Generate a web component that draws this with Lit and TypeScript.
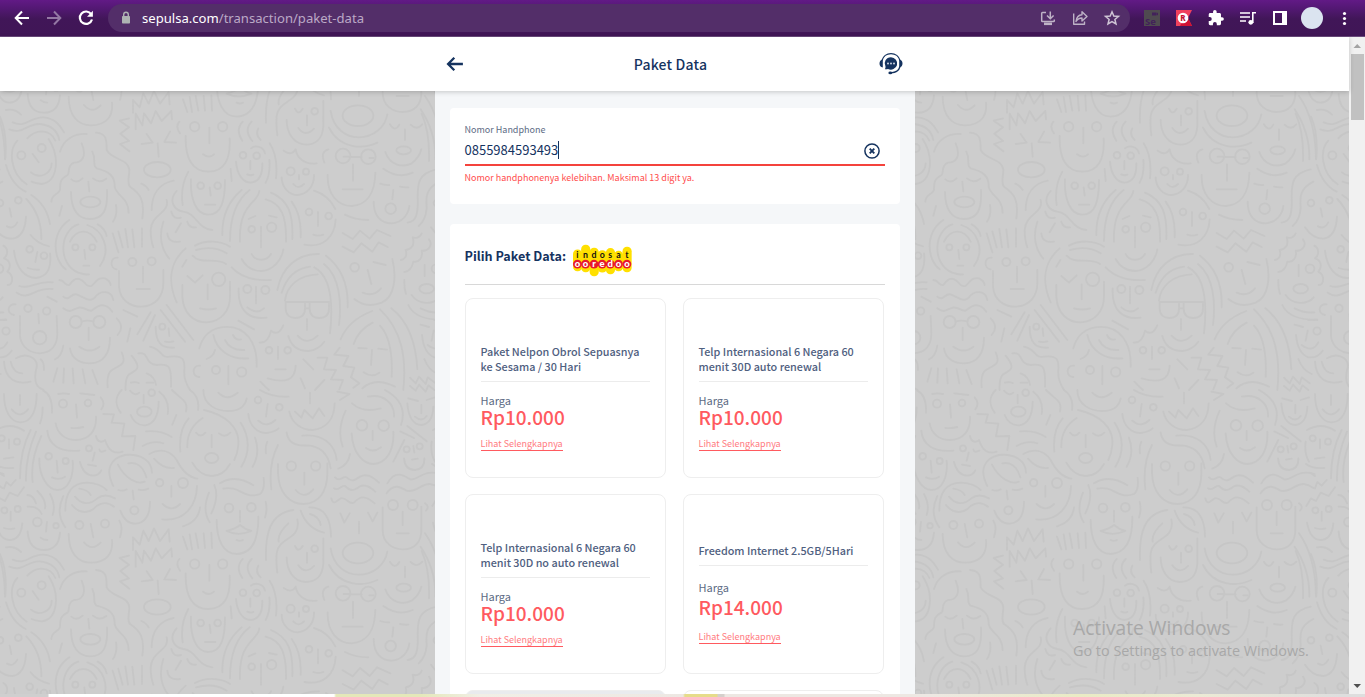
import { LitElement, html, css, svg } from "lit";
import { customElement, property } from "lit/decorators.js";

type Dot = [number, number, number];

/* ---- Doodle wallpaper: one 1311x1312 tile, drawn at a third of its size ---- */

const LOWER_PATHS = `
M12,12C12,60 30,97 62,97C95,97 110,60 110,12M60,15V45M35,58Q60,88 84,58M128,52Q128,80 120,100M130,2Q158,15 156,68
M175,12Q190,8 207,12M241,10L283,15M228,43L231,83M302,22Q318,40 304,58M214,114Q232,116 250,111M167,100C172,130 195,150 225,150C270,150 290,120 288,80
M142,122C145,165 180,187 238,182M310,72L342,73L335,98L373,101L366,139L406,138L400,180
M288,138C292,158 308,158 315,150C325,180 340,195 368,185M284,188L278,212M264,224L288,228M298,178Q300,190 316,182M240,216Q250,256 280,257Q298,255 304,241
M27,148V175M12,206L40,202M-12,120Q32,95 72,122M-15,222Q5,237 40,234M0,250L12,258
M92,120Q60,180 60,265M108,125Q76,200 78,272M124,138Q90,210 98,276
M170,212L173,248M156,262Q178,272 195,260M118,205C116,260 145,300 172,300C205,300 222,260 218,212
M12,295L19,276L32,287L47,270M-14,348L0,325L15,333L29,308L53,318L72,292
M32,365V392M12,414Q28,420 43,415M-12,398Q-2,450 28,450Q62,450 67,400
M82,315Q100,315 108,340M83,350Q115,348 125,372M112,303Q140,330 135,355M150,312Q168,345 158,375
M141,396L138,425M122,443Q132,450 142,450M83,424Q86,480 132,480Q176,480 180,428
M196,362C195,310 215,278 262,278Q300,280 320,300M190,318Q165,370 196,412M238,296Q265,300 272,315M225,320C245,345 270,345 292,325Q315,308 345,325M216,345C240,375 270,370 290,348Q315,330 342,350
M272,402L280,442M252,457Q276,485 302,458M358,392Q370,410 360,442M206,432C206,490 235,518 272,518C320,518 340,490 336,450
M340,288C315,240 330,205 375,195C420,190 455,210 456,248M354,224C375,265 410,285 434,275M439,262C430,230 410,215 385,220M355,300Q368,305 380,298M416,299Q430,303 445,296M398,302L401,328M361,362C372,392 390,402 408,401C435,398 450,375 450,335
M438,124Q485,120 515,141M428,168Q460,150 490,160M448,192C480,175 510,180 530,210Q555,260 592,266M462,206Q490,238 522,234
M514,288V320M488,342Q515,368 540,342M487,388C550,395 590,350 591,288M549,409Q595,395 600,352
M390,2Q405,20 418,8M431,15V40M392,75Q405,107 435,106Q475,100 476,35M365,0C345,20 345,45 362,68M478,5Q510,30 503,72M516,0C545,30 565,30 558,65M570,0Q600,20 594,60M529,75L517,104
M610,0C610,45 650,63 685,63C715,63 735,50 740,25M655,8Q680,35 713,8
M612,60C680,75 720,115 715,165Q713,190 703,210M608,84Q560,115 562,172M566,85Q535,120 541,185M588,128Q602,145 616,128M657,130Q675,145 691,128M635,135V172M577,218Q600,258 635,258Q670,258 690,222M722,98C750,140 750,190 724,230M765,143Q782,190 758,230
M803,42L798,80M775,92Q800,115 826,90M745,72C748,110 775,130 800,129Q825,125 836,115M802,155Q795,170 798,190M780,0Q815,22 866,20
M930,8V40M885,65L904,83L913,60L938,85L957,55L973,78M868,65C875,100 905,120 938,120C985,115 1003,80 1004,40M1012,5L1048,12L1020,30
M860,127C865,165 895,168 920,166C960,168 985,190 992,235M907,137C970,130 1005,165 1010,210M1015,236Q1045,225 1050,192M1037,62Q1010,120 1028,170
M913,248V284M887,300Q913,330 940,298M834,222V250C836,310 870,342 910,342C960,340 982,300 982,250V220M834,165Q805,220 814,298
M1118,123V150M1098,174Q1120,190 1143,172M1055,130C1058,190 1090,222 1120,222C1160,220 1183,180 1180,125M1056,40Q1090,70 1142,55M1104,20C1150,10 1185,40 1182,80M1155,0C1210,30 1215,70 1203,105
M1240,168L1243,188M1236,209L1253,206M1212,205Q1215,240 1245,240Q1275,237 1273,205M1201,124L1242,144M1213,150L1180,215M1222,108L1280,154
M1225,25L1254,33M1280,30L1305,22M1264,45V70M1245,80Q1265,98 1280,78M1222,40C1225,80 1240,105 1265,105Q1298,100 1300,50M1295,155Q1290,190 1305,215
M1005,262C1020,278 1025,258 1040,262C1055,278 1065,270 1080,260C1100,250 1115,258 1137,278M1002,295C1015,305 1022,285 1035,288C1052,305 1062,302 1078,290C1095,280 1112,292 1126,305M994,325C1000,350 1012,330 1022,325C1040,320 1045,345 1062,338C1080,318 1095,315 1124,340
M1162,280C1185,240 1210,255 1230,268C1250,275 1270,235 1322,252M1160,310C1180,280 1200,290 1220,302C1245,310 1265,280 1290,282Q1305,284 1318,294
M1208,365V405M1190,430H1226M1148,352V420C1148,460 1180,478 1208,478C1245,478 1264,455 1264,420V350M1275,340Q1290,350 1278,362
M1021,370L1033,398L1049,370M1104,368L1118,394L1132,368M1077,395V430M992,475C1000,530 1040,554 1075,554C1120,554 1155,525 1162,485M987,525C1020,590 1090,590 1132,570
M720,362V395M680,423Q710,415 720,405Q735,418 754,423Q715,440 680,423M710,450Q720,455 729,450M650,390C650,450 670,492 710,492C755,490 776,450 775,380M797,335Q803,360 795,382M643,285Q658,320 634,370M627,308Q605,360 629,397M660,280C700,255 735,270 760,286M670,296C720,285 730,330 780,312Q795,300 791,264
M798,510C795,430 810,370 880,360M892,388C905,450 835,440 830,490Q828,520 832,548M865,400Q832,430 836,455M902,362C915,400 940,420 972,428M930,372Q958,380 962,405M928,352C975,350 993,390 993,440M885,468Q895,490 908,468M921,488V518M895,526Q917,555 942,528M970,445V520C968,560 945,576 917,576C880,574 860,540 860,502
M399,480V442L419,464L430,422L446,453L462,415L480,453L506,418L509,455M407,530V483L427,518L432,482L453,512L467,475L485,505L514,475L516,500M387,497L359,504L387,524L361,543L387,565L360,574L388,596
M549,440L562,478M569,433L576,478M587,430L595,474M611,430L615,474M634,428L636,474
M1265,483Q1290,540 1287,625M1275,430Q1325,500 1326,620M1262,470Q1308,540 1306,620M1170,515Q1185,540 1198,516M1232,516Q1250,535 1267,515M1215,530V562M1156,598C1170,640 1210,645 1235,632Q1258,615 1264,590M1150,648Q1195,680 1238,660`;

const LOWER_DOTS: Dot[] = [
  [189, 41, 12], [264, 39, 10], [267, 175, 9], [5, 145, 9], [51, 155, 9], [146, 199, 10], [197, 213, 9],
  [13, 361, 9], [53, 357, 9], [112, 396, 13], [168, 407, 8], [238, 405, 12], [315, 401, 12], [403, 361, 12],
  [479, 278, 11], [549, 279, 15], [455, 8, 10], [774, 30, 10], [838, 52, 10], [874, 228, 14], [947, 228, 14],
  [1086, 106, 16], [1151, 107, 16], [1220, 178, 9], [1259, 169, 9], [1179, 345, 15], [1238, 345, 15],
  [687, 354, 13], [754, 352, 13], [944, 476, 10],
];

const LEFT_PATHS = `
M18,60Q45,55 63,74M38,97C80,115 90,80 130,82C165,85 180,105 192,127M28,118C70,135 80,100 120,102Q170,108 178,150M82,145Q100,125 125,124Q155,125 166,152
M98,192L116,217M93,247C120,270 155,250 155,220M52,152C25,180 30,250 80,283M146,147C180,200 175,275 125,282Q105,280 95,275M18,225Q35,285 77,305M0,80Q22,130 16,205
M180,185C190,150 220,130 260,132M245,160C262,200 245,218 222,218C200,225 210,250 203,255C185,265 180,270 180,300C175,315 155,310 154,335M288,128C320,130 320,150 320,180C335,210 385,205 388,240C388,260 380,280 390,290C420,310 435,330 427,385M277,185C290,210 275,225 290,235C330,245 345,260 344,290C350,320 385,320 386,368
M214,268Q230,282 248,265M279,265Q298,282 319,266M265,275L268,304M213,306C213,360 235,387 270,387C310,387 324,360 321,300M186,348L178,377M348,345Q353,375 339,395
M425,162L458,158L440,132M510,125L493,156L528,158M473,160L476,200M538,95Q525,110 540,130M424,281Q440,288 446,300
M628,113V160M609,193Q627,207 642,193M557,138C555,210 580,245 625,245C675,245 692,205 689,145
M629,292L632,317M615,344H646M573,268C570,330 590,374 625,374C665,374 675,330 675,270M565,245Q540,290 548,345M521,272C480,280 455,310 455,360
M530,303C505,330 520,360 550,365C590,370 590,415 637,420M500,330C510,370 455,370 452,420Q452,450 460,472M490,395C475,440 485,480 508,506M514,365Q520,390 543,383M562,395Q568,415 588,412M543,400L527,427M502,430Q505,460 540,455
M29,355L34,380M21,409Q40,420 52,397M-18,412Q5,447 38,446Q75,440 78,380M79,327Q125,375 124,447M94,315Q140,345 150,402M92,435Q110,460 147,469
M112,486L106,516M83,534Q100,540 117,539M42,482C48,535 75,564 108,564C145,560 155,530 150,490M58,588C90,600 110,570 158,577M50,608C90,635 100,590 158,597M142,620L170,635
M10,467C25,475 25,495 12,505C30,510 35,530 22,545C42,555 40,585 23,585
M253,480L256,507M250,527H268M210,455C230,415 270,415 290,455M235,403C180,420 170,520 235,548Q255,555 267,553M208,390C150,430 160,510 197,538M262,405C310,420 335,480 300,528M293,403Q315,415 320,438
M338,430L355,487M355,424L368,472M376,417L384,472M397,418L403,472M426,415V470
M429,530V577M410,597H450M357,543V590C360,630 390,650 425,650C470,648 490,615 490,580V540M353,503C330,500 328,535 350,538
M178,570C195,570 195,590 208,585C225,560 240,560 260,585C285,600 280,560 315,565Q330,572 332,585M190,620C210,635 210,610 230,613C250,620 270,640 285,622C300,600 335,600 340,630M190,655C210,670 215,660 230,655C250,645 260,665 275,662C300,640 320,640 337,665
M245,694Q262,690 280,694M266,713V750M238,770Q270,793 298,770M210,775C215,810 245,820 270,820C310,818 330,790 330,743M350,685Q375,710 353,735M391,715L382,755
M115,672L117,700M60,678V740C65,775 95,790 120,790C155,788 172,765 172,730L170,678M47,643C20,640 20,672 42,675M190,767Q185,800 165,808
M172,835L160,875M192,835L190,878M218,835L221,880M248,838L256,880M277,840L293,882
M-8,690L18,688M-28,765Q5,790 22,757M35,782Q20,805 -8,802Q-40,790 -45,735M-10,722L-16,752
M12,815C15,870 50,885 92,875M32,815Q40,850 67,850M48,805C80,785 120,805 108,840C100,880 115,895 130,899M122,808Q132,815 132,840
M370,660L412,680M452,667L412,733M465,675L430,752M482,660L555,755M500,645L580,750M506,715L508,738M495,755Q508,758 520,754M467,710C467,760 485,775 522,773
M365,787C385,830 350,825 330,845Q320,860 323,892M395,797C430,840 405,840 385,855Q375,870 377,900M415,790C450,785 430,820 470,825C510,820 515,830 513,890M450,770C490,780 480,805 510,800C550,795 555,810 553,840Q550,870 570,900M393,878Q405,874 416,879M440,878L460,878M440,850Q465,860 468,885
M557,475C505,520 505,580 530,637M559,510L547,530M562,558L585,578L608,556M623,583V628M600,655Q625,662 648,655M547,585V620C550,670 580,697 620,697C665,695 690,660 690,620V575M585,467C615,450 660,450 690,470M588,480Q640,465 680,490M578,497C600,525 650,500 678,522
M598,775C610,725 650,705 700,712C755,725 772,780 770,830M640,735C650,780 690,810 745,805M685,828V883M600,827C575,825 575,862 598,861M620,807Q640,800 645,780`;

const LEFT_DOTS: Dot[] = [
  [64, 196, 12], [125, 174, 12], [584, 110, 14], [668, 110, 14], [602, 287, 10], [653, 287, 10], [0, 339, 10],
  [55, 331, 10], [89, 478, 10], [132, 497, 10], [-3, 536, 13], [226, 472, 9], [277, 472, 9], [397, 516, 12],
  [455, 514, 12], [227, 696, 18], [298, 696, 18], [84, 655, 11], [140, 663, 11], [119, 743, 20], [18, 723, 11],
  [487, 710, 9], [656, 568, 20], [648, 840, 12], [725, 846, 14],
];

const RIGHT_PATHS = `
M83,95Q60,120 82,152M110,95Q85,120 112,153M130,115Q120,135 137,150
M106,213V238M97,253Q107,258 115,254M63,215C66,255 85,278 107,278C135,275 143,250 142,220M108,175C120,165 145,168 150,190M164,160Q190,200 183,265M163,210Q167,250 152,278M47,237L50,273
M206,182C225,195 235,190 242,178C245,200 265,225 305,220M252,255V268M235,282Q250,300 267,282M200,262C200,295 225,315 248,315C275,313 298,290 297,255
M386,200H402M402,201H440M463,204H476M414,223V272M383,298H443M338,255C336,315 370,348 410,348C455,345 480,310 481,248M340,178Q315,185 328,218
M496,281Q510,286 523,285M555,290Q568,293 580,292M535,300L532,328M476,335C476,380 500,400 530,400C560,398 580,375 583,348
M665,238C610,250 608,280 608,320C610,370 605,395 578,398M673,275C625,300 635,330 635,355Q632,390 611,408
M80,300Q20,350 22,435M104,300Q45,345 45,453M133,303C130,340 70,340 75,455M152,328C200,340 215,380 213,455M168,308C220,330 235,370 232,447M230,335Q260,375 257,442M138,410V472M101,387L121,378M162,377L185,382M110,492C120,515 155,515 168,492M80,507C95,535 120,543 140,543C175,540 200,510 205,478M50,532Q90,575 168,570
M309,366V408M295,434Q310,440 325,434M297,302Q340,315 361,357M362,388C360,440 325,475 268,464M390,374Q420,390 460,390
M383,429L413,447L435,422L464,446L486,420L526,438M383,470L416,487L439,460L472,485L491,457L518,471
M458,540L469,582M475,516L512,525M443,608Q475,622 498,595M418,627C440,645 470,650 500,638C540,620 545,560 532,507
M620,430C615,445 600,445 593,442C600,465 590,478 572,480C578,500 568,508 558,510M642,448C655,465 640,485 620,482C625,505 610,518 595,515C590,540 580,545 568,546M629,525V558M568,570Q567,595 573,612M590,615C610,645 655,645 674,622M580,645Q600,690 685,690M617,655Q645,670 676,667M617,704L642,711
M123,590V640M97,652Q125,675 147,655M71,595C68,660 100,690 155,683
M187,600C200,530 250,490 312,492M200,608C215,560 245,535 285,530M210,632C215,585 255,555 308,553M333,497C390,540 400,600 398,652M327,522C375,560 380,640 372,705M298,532C350,560 355,640 345,730M212,636H342V655C342,675 330,684 313,684C295,684 284,675 284,655V636M212,636V655C212,675 225,684 241,684C258,684 270,675 270,655V636M270,655H284M276,687V720M248,737Q275,768 308,737M220,738C230,775 255,783 280,783Q310,780 328,755
M70,692L117,718M134,758Q160,760 168,722Q190,740 205,706M189,770V807M181,838H212M158,865Q240,890 242,827M265,808L295,838M30,750Q45,782 88,780M54,735Q62,752 78,748
M308,803L337,803L327,838L363,840L348,868L384,870L373,898M374,773L358,794L400,798L385,828L418,833L408,862L433,880L415,893
M472,663Q400,690 377,748M473,698Q430,720 416,762M430,774L455,775M490,776L516,779M471,780L468,825M446,847Q470,865 493,848M495,707Q535,750 530,860M495,658C560,720 575,800 565,900M529,655Q600,710 607,837M442,895Q480,860 540,890
M585,863L602,880L612,860L632,882L638,862L662,880M585,888L602,902L612,884L632,905L640,886L658,900M628,807Q640,840 668,852M136,875Q150,890 162,900M257,865L270,895M328,870L300,900`;

const RIGHT_DOTS: Dot[] = [
  [84, 196, 10], [125, 197, 10], [227, 244, 12], [273, 245, 9], [384, 198, 22], [460, 200, 22], [527, 356, 16],
  [110, 418, 10], [170, 412, 14], [282, 366, 10], [341, 378, 10], [419, 532, 13], [97, 597, 12], [151, 600, 12],
  [162, 781, 10], [218, 781, 10],
];

const dots = (list: Dot[]) => list.map(([x, y, r]) => svg`<circle cx=${x} cy=${y} r=${r}></circle>`);

const TILE_SPOTS = [-1, 0, 1, 2, 3].flatMap((c) => [-1, 0, 1].map((r) => [c * 1311, r * 1312]));

const wallpaper = () => html`
  <svg class="wallpaper" viewBox="0 3 4047 1809" width="1349" height="603" aria-hidden="true">
    <defs>
      <g id="tile">
        <path d=${LEFT_PATHS}></path>
        ${dots(LEFT_DOTS)}
        <ellipse cx="271" cy="336" rx="30" ry="16"></ellipse>
        <ellipse cx="472" cy="239" rx="40" ry="23"></ellipse>
        <g transform="translate(645 0)">
          <path d=${RIGHT_PATHS}></path>
          ${dots(RIGHT_DOTS)}
          <ellipse cx="635" cy="596" rx="22" ry="14"></ellipse>
        </g>
        <g transform="translate(0 900)">
          <path d=${LOWER_PATHS}></path>
          ${dots(LOWER_DOTS)}
          <ellipse cx="433" cy="65" rx="22" ry="15"></ellipse>
          <ellipse cx="635" cy="204" rx="20" ry="15"></ellipse>
          <ellipse cx="1074" cy="489" rx="46" ry="31"></ellipse>
          <ellipse cx="1211" cy="593" rx="22" ry="12"></ellipse>
        </g>
      </g>
    </defs>
    ${TILE_SPOTS.map(([x, y]) => svg`<use href="#tile" x=${x} y=${y}></use>`)}
  </svg>
`;

/* ---- Browser bar ---- */

@customElement("browser-bar")
export class BrowserBar extends LitElement {
  static styles = css`
    :host {
      display: flex;
      align-items: flex-start;
      box-sizing: border-box;
      height: 37px;
      padding: 4px 9px 0 10px;
      background: linear-gradient(#621a86 0, #521872 9px, #411658 19px, #401656 100%);
      border-bottom: 1px solid #6b4b7d;
    }
    svg { display: block; flex: none; }
    .nav { display: flex; gap: 8px; padding-top: 2px; width: 98px; }
    .pill {
      display: flex;
      align-items: center;
      flex: 1;
      height: 28px;
      box-sizing: border-box;
      padding: 0 6px;
      border-radius: 14px;
      background: #532e69;
    }
    .lock { margin-right: 4px; }
    .url {
      flex: 1;
      font: 13.1px/20px "Noto Sans", "Open Sans", sans-serif;
      color: #bba9c6;
      white-space: nowrap;
    }
    .host { color: #fff; }
    .icons { display: flex; gap: 8px; }
    .tools { margin: 2px 0 0 10px; }
  `;

  render() {
    return html`
      <div class="nav">
        <svg width="24" height="24" fill="none" stroke="#fff" stroke-width="2"><path d="M19 12H6M12 5.500L5.700 12L12 18.500"/></svg>
        <svg width="24" height="24" fill="none" stroke="#9478a4" stroke-width="2"><path d="M5 12H18M12 5.500L18.300 12L12 18.500"/></svg>
        <svg width="24" height="24" fill="none" stroke="#fff" stroke-width="2.200"><path d="M17.200 8.200A6.200 6.200 0 1 0 18 13.500"/><path d="M18.900 4.800V10.700H13Z" fill="#fff" stroke="none"/></svg>
      </div>
      <div class="pill">
        <svg class="lock" width="24" height="24"><rect x="8" y="10" width="8" height="7.500" rx=".8" fill="#aeb3b2"/><path d="M9.700 10.500V8.500A2.300 2.300 0 0 1 14.300 8.500V10.500" fill="none" stroke="#aeb3b2" stroke-width="1.400"/></svg>
        <div class="url"><span class="host">sepulsa.com</span>/transaction/paket-data</div>
        <div class="icons">
          <svg width="24" height="24" fill="none" stroke="#beb2c6" stroke-width="1.500"><path d="M10 6.500H6.500Q5.700 6.500 5.700 7.300V14.800Q5.700 15.600 6.500 15.600H17.500Q18.300 15.600 18.300 14.800V13.500M14.300 5.500V12.500M11 9.500L14.300 12.800L17.600 9.500"/><path d="M8 17.800H16" stroke-width="2.600"/></svg>
          <svg width="24" height="24" fill="none" stroke="#beb2c6" stroke-width="1.400" stroke-linejoin="round"><path d="M5.700 7.500V18.300H16.500V15.500M8 15.500C8.500 11.500 10.500 9 14 8.800V5.800L19 10.500L14 15V12C11.500 12 9.500 13 8 15.500Z"/></svg>
          <svg width="24" height="24" fill="none" stroke="#cfc5d5" stroke-width="1.500"><path d="M12 5.800L13.800 10L18.500 10.400L14.900 13.500L16 18L12 15.600L8 18L9.100 13.500L5.500 10.400L10.200 10Z"/></svg>
        </div>
      </div>
      <div class="icons tools">
        <svg width="24" height="24"><rect x="4" y="4" width="16" height="16" fill="#4f4a50"/><rect x="12" y="6.500" width="4.500" height="3" fill="#42215a"/><path d="M16 8L18 6.500V9.500Z" fill="#42215a"/><text x="5" y="18.500" font-family="Noto Sans" font-weight="700" font-size="9.500" fill="#42215a">Se</text></svg>
        <svg width="24" height="24"><path d="M4 4H20L16 12L20 20H4Z" fill="#f0415d"/><path d="M9 18L16 12L20 20H8Z" fill="#cf1233"/><circle cx="11" cy="12" r="5.300" fill="#fff"/><text x="8.300" y="15" font-family="Noto Sans" font-weight="800" font-size="8" fill="#c41431">R</text></svg>
        <svg width="24" height="24" viewBox="0 0 24 24"><path transform="translate(3.300 3.300) scale(.72)" fill="#fff" d="M20.500 11H19V7c0-1.100-.9-2-2-2h-4V3.500a2.500 2.500 0 0 0-5 0V5H4c-1.100 0-2 .9-2 2v3.800h1.500a2.700 2.700 0 0 1 0 5.400H2V20c0 1.100.9 2 2 2h3.800v-1.500a2.700 2.700 0 0 1 5.400 0V22H17c1.100 0 2-.9 2-2v-4h1.500a2.500 2.500 0 0 0 0-5z"/></svg>
        <svg width="24" height="24" fill="none" stroke="#fff" stroke-width="1.600"><path d="M4 7H14M4 11H14M4 15H10M16.800 17V6.800H20"/><circle cx="14.800" cy="16.300" r="2.400" fill="#fff" stroke="none"/></svg>
        <svg width="24" height="24"><path d="M5 5H19V19H5ZM7 7V17H14V7Z" fill="#fff" fill-rule="evenodd"/></svg>
        <svg width="24" height="24"><circle cx="12" cy="12" r="11" fill="#dbe4f0"/></svg>
        <svg width="24" height="24" fill="#fff"><circle cx="12.500" cy="7.500" r="1.600"/><circle cx="12.500" cy="12.500" r="1.600"/><circle cx="12.500" cy="17.500" r="1.600"/></svg>
      </div>
    `;
  }
}

/* ---- Data package card ---- */

interface Pack {
  lines: string[];
  price: string;
}

@customElement("pack-card")
export class PackCard extends LitElement {
  @property({ attribute: false }) pack?: Pack;

  static styles = css`
    :host {
      display: block;
      box-sizing: border-box;
      height: 180px;
      padding: 45px 15px 0;
      border: 1px solid #eee;
      border-radius: 8px;
      background: #fff;
      font-family: "Noto Sans CJK JP", "Noto Sans", sans-serif;
      color: #5d6b84;
      white-space: nowrap;
    }
    .title {
      height: 37px;
      border-bottom: 1px solid #ececec;
      font-size: 10.8px;
      font-weight: 500;
      line-height: 15px;
      color: #4f6080;
    }
    .label { margin-top: 10px; font-size: 11px; line-height: 16px; }
    .price { font-size: 19px; font-weight: 500; line-height: 18px; color: #ff5a5f; }
    .more {
      display: inline-block;
      margin-top: 12px;
      font-size: 9px;
      line-height: 12px;
      color: #ff7b7f;
      border-bottom: 1px solid #ff5a5f;
      vertical-align: top;
    }
    .one .title { height: 22px; padding-top: 3px; }
    .one .label { margin-top: 13px; }
    .one .price { line-height: 23px; }
    .one .more { margin-top: 13px; }
  `;

  render() {
    const p = this.pack;
    if (!p) return html``;
    return html`
      <div class=${p.lines.length === 1 ? "one" : "two"}>
        <div class="title">${p.lines.map((l) => html`<div>${l}</div>`)}</div>
        <div class="label">Harga</div>
        <div class="price">${p.price}</div>
        <div class="more">Lihat Selengkapnya</div>
      </div>
    `;
  }
}

const PACKS: Pack[] = [
  { lines: ["Paket Nelpon Obrol Sepuasnya", "ke Sesama / 30 Hari"], price: "Rp10.000" },
  { lines: ["Telp Internasional 6 Negara 60", "menit 30D auto renewal"], price: "Rp10.000" },
  { lines: ["Telp Internasional 6 Negara 60", "menit 30D no auto renewal"], price: "Rp10.000" },
  { lines: ["Freedom Internet 2.5GB/5Hari"], price: "Rp14.000" },
];

/* Lobes of the operator logo: centre x, top, bottom, upper letter, lower letter */
const LOBES: [number, number, number, string, string][] = [
  [13, 16, 80, "i", "o"],
  [37, 2, 83, "n", "o"],
  [62, 11, 95, "d", "r"],
  [86, 18, 84, "o", "e"],
  [110, 12, 89, "s", "d"],
  [134, 20, 80, "a", "o"],
  [159, 8, 83, "t", "o"],
];

@customElement("app-root")
export class AppRoot extends LitElement {
  static styles = css`
    :host {
      display: flex;
      flex-direction: column;
      position: relative;
      width: 1365px;
      height: 697px;
      overflow: hidden;
      font-family: "Noto Sans CJK JP", "Noto Sans", sans-serif;
      color: #15335f;
      white-space: nowrap;
    }
    svg { display: block; flex: none; }
    .viewport { display: flex; height: 657px; }
    .page { flex: 1; display: flex; flex-direction: column; min-width: 0; }
    .header {
      display: flex;
      justify-content: center;
      flex: none;
      height: 54px;
      background: #fff;
      box-shadow: 0 1px 5px rgba(0, 0, 0, 0.2);
      z-index: 1;
    }
    .bar { display: flex; align-items: center; justify-content: space-between; width: 480px; box-sizing: border-box; padding: 0 11px 0 10px; }
    .heading { font-size: 14px; font-weight: 500; line-height: 20px; letter-spacing: 0.2px; padding: 0 0 1px 1px; }
    .stage { display: grid; justify-content: center; height: 603px; background: #cdcdcd; overflow: hidden; }
    .stage > * { grid-area: 1 / 1; }
    .wallpaper { fill: none; stroke: #c6c6c6; stroke-width: 5.5; stroke-linecap: round; stroke-linejoin: round; }
    .column { justify-self: center; width: 480px; box-sizing: border-box; padding: 17px 15px 0; background: #f5f7f9; z-index: 0; height: 603px; overflow: hidden; }
    .panel { background: #fff; border-radius: 4px; padding: 0 15px; }
    .phone { height: 96px; box-sizing: border-box; padding-top: 14px; margin-bottom: 20px; }
    .caption { font-size: 9px; line-height: 16px; color: #5d6b84; }
    .field { display: flex; align-items: center; justify-content: space-between; height: 26px; border-bottom: 2px solid #f4433c; }
    .number { display: flex; align-items: center; font-size: 13px; line-height: 20px; padding-bottom: 2px; }
    .caret { width: 1px; height: 18px; background: #15335f; }
    .clear { margin-right: 4px; }
    .error { font-size: 9px; line-height: 14px; margin-top: 5px; color: #ff4d4d; }
    .choose { padding-top: 19px; height: 500px; }
    .choose-title { display: flex; height: 41px; border-bottom: 1px solid #d8d8d8; font-size: 12.6px; font-weight: 700; line-height: 26px; }
    .logo { margin: 1px 0 0 7px; }
    .grid { display: grid; grid-template-columns: 201px 201px; column-gap: 17px; row-gap: 16px; padding-top: 13px; }
    .stub { height: 180px; border-radius: 8px; box-sizing: border-box; border: 1px solid #eee; background: #fff; }
    .dim { background: #e9ebee; }
    .scroll { width: 16px; background: #f1f1f1; display: flex; flex-direction: column; align-items: center; }
    .thumb { width: 13px; height: 66px; background: #c1c1c1; }
    .down { margin-top: auto; }
    .strip {
      height: 3px;
      background: linear-gradient(90deg, #cfcfcf 48px, #fff 49px 334px, #e4e8b9 336px 420px, #f1efe6 480px, #ede8e3 683px, #e6dc8a 685px 717px, #d5d0cc 718px 724px, #ede8e3 725px 930px, #e9ebc4 1080px, #ebead5 1200px, #dedede 1340px);
    }
    .watermark { position: absolute; left: 1073px; top: 616px; font-family: "Open Sans", "Noto Sans", sans-serif; color: #a8a8a8; z-index: 3; }
    .big { font-size: 19.2px; line-height: 24px; }
    .small { font-size: 14.4px; line-height: 21px; }
  `;

  render() {
    return html`
      <browser-bar></browser-bar>
      <div class="viewport">
        <div class="page">
          <div class="header">
            <div class="bar">
              <svg width="20" height="20" fill="none" stroke="#15335f" stroke-width="2.300"><path d="M3 10H17.900M9.300 3.800L3.100 10L9.300 16.200"/></svg>
              <div class="heading">Paket Data</div>
              <svg width="28" height="26" viewBox="0 0 28 26">
                <path d="M6 9.500A9.300 9.300 0 0 1 24 9.500M24 15.500Q22.500 21.300 15 21.800" fill="none" stroke="#15335f" stroke-width="1.300"/>
                <path d="M6.800 8.500V16.500Q3.500 16 3.500 12.500T6.800 8.500ZM23.200 8.500V16.500Q26.500 16 26.500 12.500T23.200 8.500Z" fill="#15335f"/>
                <path d="M15 6.200A6.300 6.200 0 1 1 12 17.900Q10.500 18.500 8.900 18.200Q9.700 17.200 9.500 15.500A6.300 6.200 0 0 1 15 6.200Z" fill="#15335f"/>
                <ellipse cx="14.300" cy="21.900" rx="1.900" ry="1.300" fill="#15335f"/>
                <g fill="#dfe5ee"><circle cx="12" cy="12.500" r=".9"/><circle cx="15" cy="12.500" r=".9"/><circle cx="18" cy="12.500" r=".9"/></g>
              </svg>
            </div>
          </div>
          <div class="stage">
            ${wallpaper()}
            <div class="column">
              <div class="panel phone">
                <div class="caption">Nomor Handphone</div>
                <div class="field">
                  <div class="number">0855984593493<span class="caret"></span></div>
                  <svg class="clear" width="18" height="18" fill="none" stroke="#15335f"><circle cx="9" cy="9" r="7.100" stroke-width="1.500"/><path d="M6.700 6.700L11.300 11.300M11.300 6.700L6.700 11.300" stroke-width="1.900"/></svg>
                </div>
                <div class="error">Nomor handphonenya kelebihan. Maksimal 13 digit ya.</div>
              </div>
              <div class="panel choose">
                <div class="choose-title">
                  <span>Pilih Paket Data:</span>
                  <svg class="logo" width="59" height="33" viewBox="0 0 174 97">
                    ${LOBES.map(([x, t, b]) => svg`<rect x=${x - 13} y=${t} width="27" height=${b - t} rx="13" fill="#ffe000"></rect>`)}
                    ${LOBES.map(([x, , , a, c]) => svg`
                      <circle cx=${x} cy="59" r="13" fill="#e8192c"></circle>
                      <text x=${x} y="42" text-anchor="middle" font-family="Lato" font-weight="700" font-size="26" fill="#111">${a}</text>
                      <text x=${x} y="66.500" text-anchor="middle" font-family="Lato" font-weight="900" font-size="28" fill="#fff">${c}</text>`)}
                  </svg>
                </div>
                <div class="grid">
                  ${PACKS.map((p) => html`<pack-card .pack=${p}></pack-card>`)}
                  <div class="stub dim"></div>
                  <div class="stub"></div>
                </div>
              </div>
            </div>
          </div>
        </div>
        <div class="scroll">
          <svg width="16" height="17"><path d="M4.500 11H12L8.250 7Z" fill="#a3a3a3"/></svg>
          <div class="thumb"></div>
          <svg class="down" width="16" height="17"><path d="M4.500 7H12L8.250 11Z" fill="#505050"/></svg>
        </div>
      </div>
      <div class="strip"></div>
      <div class="watermark">
        <div class="big">Activate Windows</div>
        <div class="small">Go to Settings to activate Windows.</div>
      </div>
    `;
  }
}
